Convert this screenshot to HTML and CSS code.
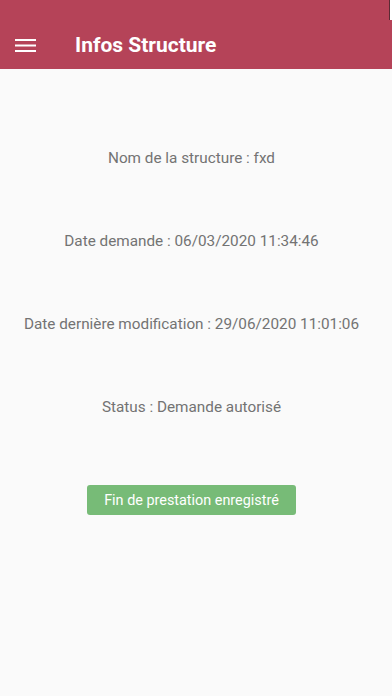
FILE: index.html
```html
<!DOCTYPE html>
<html lang="fr">
<head>
    <meta charset="UTF-8">
    <meta name="viewport" content="width=device-width, initial-scale=1.0">
    <title>Infos Structure</title>
    <link rel="stylesheet" href="styles.css">
</head>
<body>
    <div class="app-header">
        <div class="status-notch"></div>
        <div class="toolbar">
            <button class="menu-btn" aria-label="Menu">
                <svg width="21" height="13" viewBox="0 0 21 13">
                    <rect x="0" y="0" width="21" height="2" fill="#fff"/>
                    <rect x="0" y="5.5" width="21" height="2" fill="#fff"/>
                    <rect x="0" y="11" width="21" height="2" fill="#fff"/>
                </svg>
            </button>
            <h1>Infos Structure</h1>
        </div>
    </div>

    <div class="info-content">
        <p class="info-line">Nom de la structure : fxd</p>
        <p class="info-line">Date demande : 06/03/2020 11:34:46</p>
        <p class="info-line">Date dernière modification : 29/06/2020 11:01:06</p>
        <p class="info-line">Status : Demande autorisé</p>

        <div class="action">
            <button class="done-btn">Fin de prestation enregistré</button>
        </div>
    </div>
</body>
</html>
```

FILE: styles.css
```css
* {
    margin: 0;
    padding: 0;
    box-sizing: border-box;
}

body {
    font-family: Roboto, "Noto Sans", sans-serif;
    background-color: #fafafa;
    color: #737373;
    height: 696px;
    overflow: hidden;
}

.app-header {
    position: relative;
    background-color: #b54358;
    height: 69px;
    padding-top: 21px;
}

/* little white corner at the top right */
.status-notch {
    position: absolute;
    top: 0;
    right: 0;
    width: 3px;
    height: 20px;
    background: #fff;
    border-left: 1px solid #5a2a33;
}

.toolbar {
    display: flex;
    align-items: center;
    height: 48px;
}

.menu-btn {
    background: none;
    border: none;
    width: 52px;
    padding-left: 15px;
    display: flex;
    align-items: center;
}

.toolbar h1 {
    margin-left: 23px;
    font-size: 21px;
    font-weight: 700;
    color: #fff;
}

.info-content {
    display: flex;
    flex-direction: column;
    align-items: center;
    padding-top: 79px;
    padding-right: 9px;
}

.info-line {
    font-size: 15.3px;
    line-height: 20px;
    text-align: center;
    margin-bottom: 63px;
}

.action {
    margin-top: 5px;
}

.done-btn {
    font-family: Roboto, "Noto Sans", sans-serif;
    background-color: #77bb77;
    color: #fff;
    border: none;
    border-radius: 3px;
    font-size: 14.4px;
    width: 209px;
    height: 30px;
}
```
